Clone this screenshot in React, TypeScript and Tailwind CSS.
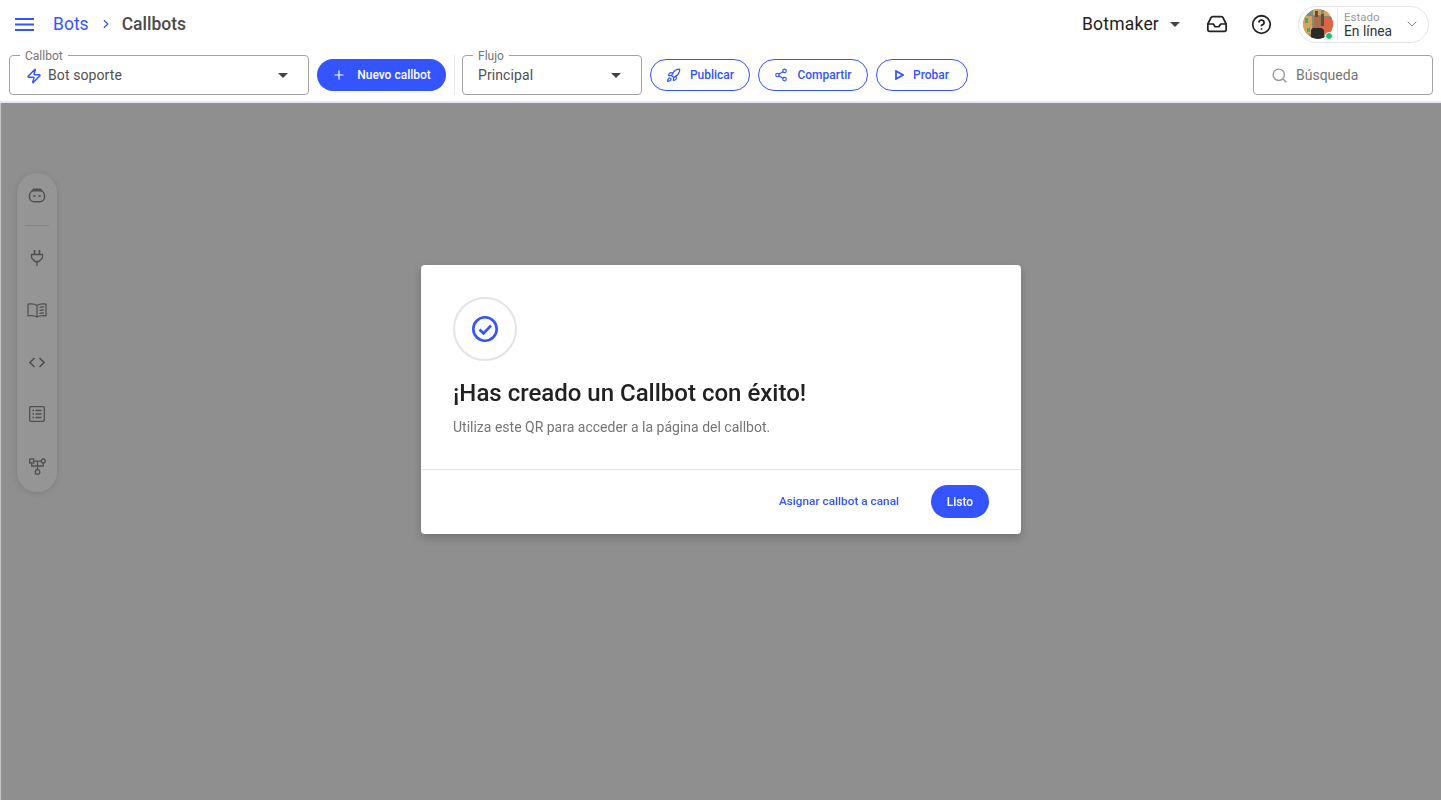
import { ChevronDown, ChevronRight, CircleHelp, Inbox, Plus, Rocket, Search, Share2, Zap } from 'lucide-react';

const font = { fontFamily: 'Roboto, sans-serif' };

const Caret = () => (
  <svg width="10" height="5" viewBox="0 0 10 5" className="shrink-0">
    <path d="M0 0h10L5 5z" fill="#444" />
  </svg>
);

const Field = ({ label, width, children }: { label: string; width: string; children: React.ReactNode }) => (
  <div className={`relative flex h-10 items-center rounded border border-[#a3a3a3] pr-[20px] ${width}`}>
    <span className="absolute -top-[6px] left-[10px] bg-white px-[5px] text-[12px] leading-[12px] text-[#757575]">{label}</span>
    <div className="flex flex-1 items-center pt-[1px] text-[14px] tracking-[0.1px] text-[#505050]">{children}</div>
    <Caret />
  </div>
);

const Outline = ({ icon, label, width }: { icon: React.ReactNode; label: string; width: string }) => (
  <button className={`flex h-8 items-center justify-center gap-[9px] rounded-full border border-[#3354ff] text-[12px] font-medium text-[#3354ff] ${width}`}>
    {icon}
    {label}
  </button>
);

const BotIcon = () => (
  <svg width="18" height="16" viewBox="0 0 18 16" fill="none" stroke="#505050" strokeWidth="1.6">
    <path d="M3.5 3 6 1l1.5 1L9 1l1.5 1L12 1l2.5 2" />
    <rect x="1" y="3" width="16" height="11.5" rx="5" />
    <path d="M5 8.5h2.5M10.5 8.5H13" />
  </svg>
);

const PlugIcon = () => (
  <svg width="14" height="16" viewBox="0 0 14 16" fill="none" stroke="#505050" strokeWidth="1.4">
    <path d="M4.5 0v4.5M9.5 0v4.5" strokeWidth="1.7" />
    <path d="M1.5 4.5h11v3.2L9 11.5H5L1.5 7.7z" />
    <path d="M7 11.5V16" />
  </svg>
);

const BookIcon = () => (
  <svg width="20" height="15" viewBox="0 0 20 15" fill="none" stroke="#505050" strokeWidth="1.2">
    <path d="M10 2.5C8 1 4.5.7 1 1.2v11.6c3.500-.5 7-.2 9 1.200 2-1.400 5.500-1.700 9-1.200V1.200C15.500.7 12 1 10 2.500zM10 2.500V14" />
    <path d="M12.500 4.500c1.500-.5 3-.6 4.500-.5M12.500 7.500c1.500-.5 3-.6 4.500-.5M12.500 10.500c1.500-.5 3-.6 4.500-.5" />
  </svg>
);

const CodeIcon = () => (
  <svg width="16" height="11" viewBox="0 0 16 11" fill="none" stroke="#505050" strokeWidth="1.6">
    <path d="M5.500 1 1 5.500 5.500 10M10.500 1 15 5.500 10.500 10" />
  </svg>
);

const ListIcon = () => (
  <svg width="16" height="16" viewBox="0 0 16 16" fill="none" stroke="#505050" strokeWidth="1.3">
    <rect x=".7" y=".7" width="14.600" height="14.600" rx="1" />
    <path d="M3.500 4.500h1.500M3.500 8h1.500M3.500 11.500h1.500M6.500 4.500h6M6.500 8h6M6.500 11.500h6" />
  </svg>
);

const FlowIcon = () => (
  <svg width="17" height="17" viewBox="0 0 17 17" fill="none" stroke="#505050" strokeWidth="1.3">
    <rect x=".7" y="1" width="4" height="4" />
    <circle cx="14.200" cy="3" r="2" />
    <circle cx="8.500" cy="14" r="2.300" />
    <path d="M4.700 3.200h7.500M8.500 3.200v8.500M2.700 5v3h11.500V5" />
  </svg>
);

const SuccessIcon = () => (
  <svg width="28" height="28" viewBox="0 0 28 28" fill="none" stroke="#3354ff" strokeWidth="2.600">
    <circle cx="14" cy="14" r="11.700" />
    <path d="m8.500 14.500 4 3.800 7.500-7.800" />
  </svg>
);

const Avatar = () => (
  <svg width="30" height="30" viewBox="0 0 30 30" className="rounded-full">
    <circle cx="15" cy="15" r="15" fill="#8d8a78" />
    <path d="M0 7h9v18H0z" fill="#d9a45a" />
    <path d="M19 8h11v17H19z" fill="#dd6543" />
    <path d="M10 0h8v6h-8zM21 0h6v7h-6z" fill="#d3a463" />
    <path d="M8 21c2-4 10-4 13 0v9H8z" fill="#2b2a2a" />
    <path d="M2 9h3v5H2zM6 4h3v3H6zM4 19h3v4H4z" fill="#3fa98c" />
    <path d="M11 7h7v12h-7z" fill="#a8714c" />
    <path d="M12 2h3v6h-3zM18 5h3v12h-3z" fill="#55514d" />
  </svg>
);

const rail = [<PlugIcon key="plug" />, <BookIcon key="book" />, <CodeIcon key="code" />, <ListIcon key="list" />, <FlowIcon key="flow" />];

export default function App() {
  return (
    <div style={font} className="flex h-[800px] w-[1441px] flex-col overflow-hidden bg-white">
      <header className="h-[103px] shrink-0 border-b-2 border-[#e3e6f8] bg-white">
        <div className="flex h-[48px] items-center pl-[15px] pr-[12px]">
          <svg width="19" height="13" viewBox="0 0 19 13" stroke="#3354ff" strokeWidth="2">
            <path d="M0 1h19M0 6.500h19M0 12h19" />
          </svg>
          <span className="ml-[19px] text-[17.500px] text-[#3354ff]">Bots</span>
          <ChevronRight size={14} strokeWidth={2} className="ml-[10px] text-[#3354ff]" />
          <span className="ml-[9px] text-[17.500px] font-medium text-[#4a4a4a]">Callbots</span>

          <div className="ml-auto flex items-center">
            <span className="text-[17.500px] tracking-[0.2px] text-[#222]">Botmaker</span>
            <span className="ml-[11px]"><Caret /></span>
            <Inbox size={22} strokeWidth={1.9} className="ml-[26px] text-[#222]" />
            <CircleHelp size={21} strokeWidth={2} className="ml-[23px] text-[#222]" />
            <div className="relative ml-[26px] flex h-[37px] w-[131px] items-center rounded-full border border-[#e4e4e4] pl-[4px]">
              <Avatar />
              <span className="absolute left-[26px] top-[25px] h-[8px] w-[8px] rounded-full border border-white bg-[#1dbf73]" />
              <div className="ml-[4px] h-[30px] w-px bg-[#e8e8e8]" />
              <div className="ml-[6px] flex flex-col pt-[2px]">
                <span className="text-[11.500px] leading-[12px] text-[#9a9a9a]">Estado</span>
                <span className="text-[13.800px] leading-[16px] text-[#333]">En línea</span>
              </div>
              <ChevronDown size={16} strokeWidth={1.500} className="ml-[12px] text-[#8a8a8a]" />
            </div>
          </div>
        </div>

        <div className="mt-[7px] flex items-center pl-[9px] pr-[8px]">
          <Field label="Callbot" width="w-[300px]">
            <Zap size={16} strokeWidth={2.200} className="ml-[16px] mr-[6px] text-[#3354ff]" />
            Bot soporte
          </Field>
          <button className="ml-[8px] flex h-8 w-[129px] items-center justify-center gap-[11px] rounded-full bg-[#3354ff] text-[12px] font-medium text-white">
            <Plus size={14} strokeWidth={2} />
            Nuevo callbot
          </button>
          <div className="ml-[8px] h-10 w-px bg-[#e8e8e8]" />
          <div className="ml-[7px]">
            <Field label="Flujo" width="w-[180px]">
              <span className="ml-[15px]">Principal</span>
            </Field>
          </div>
          <div className="ml-[8px] flex gap-[8px]">
            <Outline icon={<Rocket size={15} strokeWidth={2} />} label="Publicar" width="w-[100px]" />
            <Outline icon={<Share2 size={14} strokeWidth={2} />} label="Compartir" width="w-[110px]" />
            <Outline icon={<svg width="9" height="10" viewBox="0 0 9 10" fill="none" stroke="currentColor" strokeWidth="1.700"><path d="M1 1v8l7-4z" /></svg>} label="Probar" width="w-[92px]" />
          </div>
          <div className="ml-auto flex h-10 w-[180px] items-center rounded border border-[#a3a3a3] pl-[17px]">
            <Search size={17} strokeWidth={2} className="text-[#9a9a9a]" />
            <span className="ml-[8px] text-[14px] text-[#757575]">Búsqueda</span>
          </div>
        </div>
      </header>

      <main className="relative flex-1 border-l border-[#c4c4c4] bg-[#8f8f8f]">
        <nav className="absolute left-[16px] top-[70px] flex h-[319px] w-[40px] flex-col items-center rounded-full bg-[#959595] pt-[15px] shadow-[0_1px_6px_rgba(0,0,0,0.12)]">
          <BotIcon />
          <div className="mt-[22px] h-px w-[24px] bg-[#858585]" />
          <div className="mt-[6px] flex w-full flex-col items-center">
            {rail.map((icon) => (
              <div key={icon.key} className="flex h-[52px] w-full items-center justify-center">{icon}</div>
            ))}
          </div>
        </nav>
      </main>

      <div className="fixed left-[421px] top-[265px] flex h-[269px] w-[600px] flex-col rounded bg-white shadow-[0_4px_10px_rgba(0,0,0,0.2)]">
        <div className="flex-1 px-[32px] pt-[32px]">
          <div className="flex h-16 w-16 items-center justify-center rounded-full border-2 border-[#e4e4e4]">
            <SuccessIcon />
          </div>
          <h1 className="mt-[16px] text-[24px] font-medium leading-[32px] text-[#212121]">¡Has creado un Callbot con éxito!</h1>
          <p className="mt-[8px] text-[14px] leading-[20px] text-[#757575]">Utiliza este QR para acceder a la página del callbot.</p>
        </div>
        <div className="flex h-[65px] items-center justify-end border-t border-[#e4e4e4] pr-[32px]">
          <span className="text-[11.800px] font-medium text-[#3354ff]">Asignar callbot a canal</span>
          <button className="mb-[1px] ml-[32px] h-[33px] w-[58px] rounded-full bg-[#3354ff] text-[12px] font-medium text-white">Listo</button>
        </div>
      </div>
    </div>
  );
}
